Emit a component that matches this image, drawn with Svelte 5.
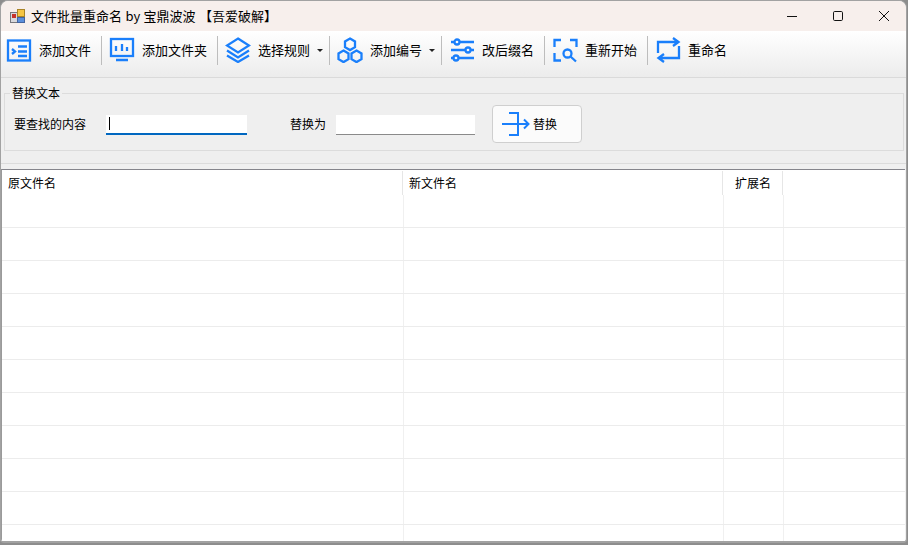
<script>
  const tools = [
    { name: 'add-file', label: '添加文件' },
    { name: 'add-folder', label: '添加文件夹' },
    { name: 'rules', label: '选择规则', menu: true },
    { name: 'number', label: '添加编号', menu: true },
    { name: 'suffix', label: '改后缀名' },
    { name: 'restart', label: '重新开始' },
    { name: 'rename', label: '重命名' }
  ]
  const rows = Array.from({ length: 11 })
</script>

<div class="window">
  <header class="titlebar">
    <svg class="app-icon" width="16" height="16" viewBox="0 0 16 16">
      <rect x="0.500" y="4.500" width="8" height="10" fill="#d8d8dc" stroke="#77777c" />
      <rect x="2" y="6" width="4" height="4" fill="#c6322b" />
      <rect x="7.500" y="1.500" width="7" height="7" fill="#f6c544" stroke="#a98428" />
      <rect x="7.500" y="9.500" width="7" height="5" fill="#5b8fdc" stroke="#44649e" />
    </svg>
    <span class="title">文件批量重命名 by 宝鼎波波 【吾爱破解】</span>
    <div class="controls">
      <span class="ctl"><svg width="12" height="12" viewBox="0 0 12 12"><path d="M1 6.500h10" stroke="#111" fill="none" /></svg></span>
      <span class="ctl"><svg width="12" height="12" viewBox="0 0 12 12"><rect x="1.500" y="1.500" width="9" height="9" rx="1.200" stroke="#111" fill="none" /></svg></span>
      <span class="ctl"><svg width="12" height="12" viewBox="0 0 12 12"><path d="M1 1l10 10M11 1L1 11" stroke="#111" fill="none" /></svg></span>
    </div>
  </header>

  <nav class="toolbar">
    {#each tools as t, i}
      {#if i > 0}<span class="sep"></span>{/if}
      <button class="tool">
        <svg class="icon" width="26" height="26" viewBox="0 0 26 26" fill="none" stroke="#1a7ffb" stroke-width="2.300">
          {#if t.name === 'add-file'}
            <rect x="2" y="3.500" width="22" height="20" />
            <path d="M6 12l3 2.500L6 17M12 9.500h9M12 14.500h9M12 19h9" />
          {:else if t.name === 'add-folder'}
            <rect x="2" y="2" width="22" height="17" />
            <path d="M7 23h12M7 9v5M13 7v7M18 10v4" />
          {:else if t.name === 'rules'}
            <path d="M13 1.500L24 8.500 13 15.500 2 8.500z" />
            <path d="M2 13.500l11 7 11-7M2 18.500l11 6.500 11-6.500" />
          {:else if t.name === 'number'}
            <path d="M13 1.500l5 2.900v5.800l-5 2.900-5-2.900V4.400z" />
            <path d="M6.500 13.500l5 2.900v5.800l-5 2.900-5-2.900v-5.800z" />
            <path d="M19.500 13.500l5 2.900v5.800l-5 2.900-5-2.900v-5.800z" />
          {:else if t.name === 'suffix'}
            <path d="M11 5h14M2 5h3.500M2 13h14.500M21.500 13H25M10 21h15M2 21h2.500" />
            <circle cx="8" cy="5" r="2.500" />
            <circle cx="19" cy="13" r="2.500" />
            <circle cx="7" cy="21" r="2.500" />
          {:else if t.name === 'restart'}
            <path d="M9 3H2.500v7M18 3h6.500v7M2.500 16v7.500H9" />
            <circle cx="15.500" cy="16.500" r="4" />
            <path d="M18.500 19.500l5.500 5" />
          {:else}
            <path d="M3 16V5h21M18 1l5.500 4-5.500 4" />
            <path d="M24 9v12H3M9 17l-5.500 4L9 25" />
          {/if}
        </svg>
        <span class="label">{t.label}</span>
        {#if t.menu}<span class="caret"></span>{/if}
      </button>
    {/each}
  </nav>

  <section class="panel">
    <fieldset class="group">
      <legend>替换文本</legend>
      <label class="field-label first" for="find">要查找的内容</label>
      <div class="input active" id="find"><span class="cursor"></span></div>
      <label class="field-label second" for="to">替换为</label>
      <div class="input" id="to"></div>
      <button class="replace">
        <svg width="28" height="24" viewBox="0 0 28 24" fill="none" stroke="#1a7ffb" stroke-width="2">
          <path d="M7 1h9v22H7" />
          <path d="M0 12h26M22 7.500l4.500 4.500-4.500 4.500" />
        </svg>
        <span>替换</span>
      </button>
    </fieldset>
  </section>

  <div class="grid">
    <div class="head">
      <span class="col c1">原文件名</span>
      <span class="col c2">新文件名</span>
      <span class="col c3">扩展名</span>
    </div>
    {#each rows as _}
      <div class="row">
        <span class="cell c1"></span>
        <span class="cell c2"></span>
        <span class="cell c3"></span>
      </div>
    {/each}
  </div>
</div>

<style>
  :global(body) {
    margin: 0;
    background: #8d8d8d;
    overflow: hidden;
  }

  .window {
    width: 907px;
    height: 543px;
    box-sizing: border-box;
    border: 1px solid #a2a2a2;
    border-bottom-width: 2px;
    border-radius: 8px 8px 4px 4px;
    overflow: hidden;
    background: #f0f0f0;
    display: flex;
    flex-direction: column;
    font-family: "Noto Sans CJK SC", "Liberation Sans", sans-serif;
    color: #000;
  }

  .titlebar {
    height: 30px;
    flex: none;
    display: flex;
    align-items: center;
    background: #f7efec;
    padding-left: 9px;
  }

  .app-icon {
    margin-right: 5px;
  }

  .title {
    font-size: 13px;
    line-height: 30px;
    word-spacing: 0.500px;
  }

  .controls {
    margin-left: auto;
    margin-right: -1px;
    display: flex;
  }

  .ctl {
    width: 46px;
    height: 30px;
    display: flex;
    align-items: center;
    justify-content: center;
  }

  .toolbar {
    height: 47px;
    flex: none;
    box-sizing: border-box;
    display: flex;
    align-items: center;
    padding: 0 0 8px 5px;
    background: linear-gradient(#fff, #ececec);
    border-bottom: 1px solid #dadada;
  }

  .sep {
    width: 1px;
    height: 29px;
    background: #bdbdbd;
    margin: 0 7px 0 10px;
  }

  .tool {
    display: flex;
    align-items: center;
    border: none;
    background: none;
    padding: 0;
    font: inherit;
    color: inherit;
  }

  .icon {
    flex: none;
  }

  .label {
    font-size: 13px;
    margin-left: 7px;
    line-height: 18px;
  }

  .caret {
    width: 0;
    height: 0;
    margin: 0 -4px 0 7px;
    border-style: solid;
    border-width: 3px 3px 0;
    border-color: #222 transparent transparent;
  }

  .panel {
    height: 86px;
    flex: none;
    box-sizing: border-box;
    padding: 7px 2px 0 3px;
    background: #efefef;
    border-bottom: 1px solid #dcdcdc;
  }

  .group {
    margin: 0;
    padding: 0 0 4px 9px;
    height: 66px;
    box-sizing: border-box;
    border: 1px solid #dcdcdc;
    display: flex;
    align-items: center;
    font-size: 12px;
  }

  legend {
    font-size: 12px;
    line-height: 16px;
    padding: 0 2px;
    margin-left: -4px;
  }

  .field-label {
    line-height: 18px;
  }

  .second {
    margin-left: 43px;
  }

  .input {
    width: 141px;
    height: 20px;
    box-sizing: border-box;
    margin: 2px 0 0 20px;
    background: #fff;
    border-bottom: 1px solid #8a8a8a;
  }

  .input.active {
    border-bottom: 2px solid #0067c0;
    padding: 2px 0 0 3px;
  }

  #to {
    width: 139px;
    margin-left: 10px;
  }

  .cursor {
    display: block;
    width: 1px;
    height: 13px;
    background: #000;
  }

  .replace {
    width: 90px;
    height: 38px;
    margin-left: 17px;
    box-sizing: border-box;
    display: flex;
    align-items: center;
    gap: 3px;
    padding: 0 0 0 9px;
    background: #fbfbfb;
    border: 1px solid #cfcfcf;
    border-radius: 4px;
    font: inherit;
    font-size: 12px;
  }

  .grid {
    flex: 1;
    min-height: 0;
    margin: 5px 1px 0 0;
    background: #fff;
    border-top: 1px solid #85858c;
    border-left: 1px solid #9a9a9a;
    overflow: hidden;
  }

  .head {
    height: 25px;
    display: flex;
    font-size: 12px;
    line-height: 23px;
    box-sizing: border-box;
    padding-top: 1px;
  }

  .col {
    box-sizing: border-box;
    height: 24px;
    border-right: 1px solid #e6e6e6;
    padding-left: 6px;
    flex: none;
  }

  .head .c1 {
    width: 401px;
  }

  .head .c2 {
    width: 320px;
  }

  .head .c3 {
    width: 60px;
    padding-left: 12px;
  }

  .row {
    height: 33px;
    box-sizing: border-box;
    display: flex;
    border-bottom: 1px solid #ececec;
  }

  .cell {
    flex: none;
    box-sizing: border-box;
    border-right: 1px solid #f0f0f0;
  }

  .cell.c1 {
    width: 402px;
  }

  .cell.c2 {
    width: 320px;
  }

  .cell.c3 {
    width: 60px;
  }
</style>
